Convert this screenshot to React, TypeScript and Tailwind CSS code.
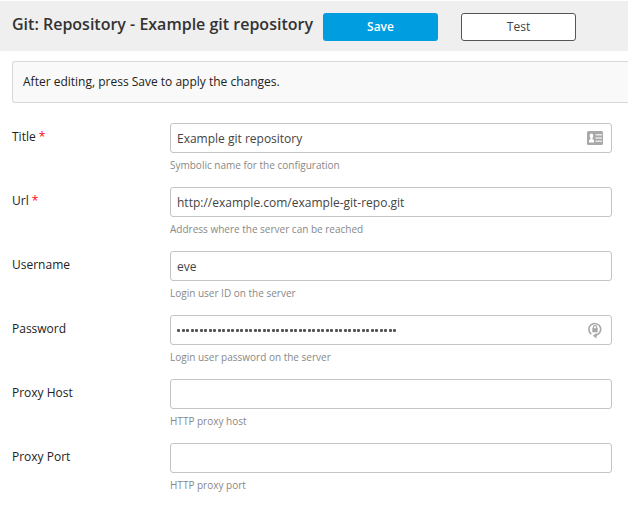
import React from "react";

type FieldProps = {
  label: string;
  help: string;
  value?: string;
  required?: boolean;
  icon?: React.ReactNode;
  secret?: boolean;
};

const CardIcon = () => (
  <svg width="16" height="14" viewBox="0 0 16 14" className="mr-0.5">
    <rect width="16" height="14" rx="1.500" fill="#a8a8a8" />
    <path fill="#fff" d="M2 11.500V10c0-1 .7-1.400 1.500-1.700V7C2.300 5.500 2.500 2.500 4.500 2.500S6.700 5.500 5.500 7v1.300C6.300 8.600 7 9 7 10v1.500z" />
    <path fill="#e6e6e6" d="M8.500 3H15v1.500H8.500zM8.500 6.250H15v1.500H8.500zM8.500 9.500H15V11H8.500z" />
  </svg>
);

const LockIcon = () => (
  <svg width="14" height="17" viewBox="0 0 14 17" fill="none" stroke="#a8a8a8" className="mr-[3px]">
    <path d="M3.300 12.100A5.900 5.900 0 1 1 10 12.300L7 13.500" strokeWidth="1.600" />
    <path d="M8.500 11v5.500L4.800 13.700z" fill="#a8a8a8" stroke="none" />
    <path d="M5.300 7V5.400a1.700 1.700 0 0 1 3.400 0V7" strokeWidth="1.200" />
    <rect x="4.300" y="6.200" width="5.400" height="4.100" fill="#a8a8a8" stroke="none" />
  </svg>
);

function Field({ label, help, value, required, icon, secret }: FieldProps) {
  return (
    <div className="flex h-16">
      <div className="w-[158px] shrink-0 pt-1.5 text-[12px] leading-4 text-[#222]">
        {label}
        {required && <span className="text-[#ff0018]"> *</span>}
      </div>
      <div className="w-[442px]">
        <div className="flex h-[30px] items-center justify-between rounded-[3px] border border-[#c4c4c4] bg-white px-1.5 text-[12px] text-[#444]">
          {secret ? (
            <div className="flex gap-[1.500px]">
              {Array.from({ length: 49 }, (_, i) => (
                <span key={i} className="size-[3px] rounded-[1px] bg-[#555]" />
              ))}
            </div>
          ) : (
            <span className="pt-0.5">{value}</span>
          )}
          {icon}
        </div>
        <p className="mt-[5px] text-[10px] leading-[14px] text-[#888]">{help}</p>
      </div>
    </div>
  );
}

export default function App() {
  return (
    <div className="h-[507px] w-[628px] overflow-hidden bg-white pt-px font-['Open_Sans',sans-serif]">
      <header className="flex h-[50px] items-center bg-[#efefef] pl-3">
        <h1 className="w-[311px] whitespace-nowrap pb-1 text-[16px] font-semibold text-[#333]">Git: Repository - Example git repository</h1>
        <button className="mt-0.5 h-7 w-[115px] rounded-[3px] bg-[#009de0] text-[12px] font-semibold text-white">Save</button>
        <button className="ml-[23px] mt-0.5 h-7 w-[115px] rounded-[3px] border border-[#555] bg-white text-[12px] text-[#444]">Test</button>
      </header>
      <div className="ml-3 mt-[10px] flex h-[42px] items-center rounded-l-[3px] border border-r-0 border-[#d8d8d8] bg-[#f9f9f9] pl-2.5 text-[12px] text-[#222]">
        After editing, press Save to apply the changes.
      </div>
      <main className="ml-3 mt-5">
        <Field label="Title" required value="Example git repository" help="Symbolic name for the configuration" icon={<CardIcon />} />
        <Field label="Url" required value="http://example.com/example-git-repo.git" help="Address where the server can be reached" />
        <Field label="Username" value="eve" help="Login user ID on the server" />
        <Field label="Password" secret help="Login user password on the server" icon={<LockIcon />} />
        <Field label="Proxy Host" help="HTTP proxy host" />
        <Field label="Proxy Port" help="HTTP proxy port" />
      </main>
    </div>
  );
}
